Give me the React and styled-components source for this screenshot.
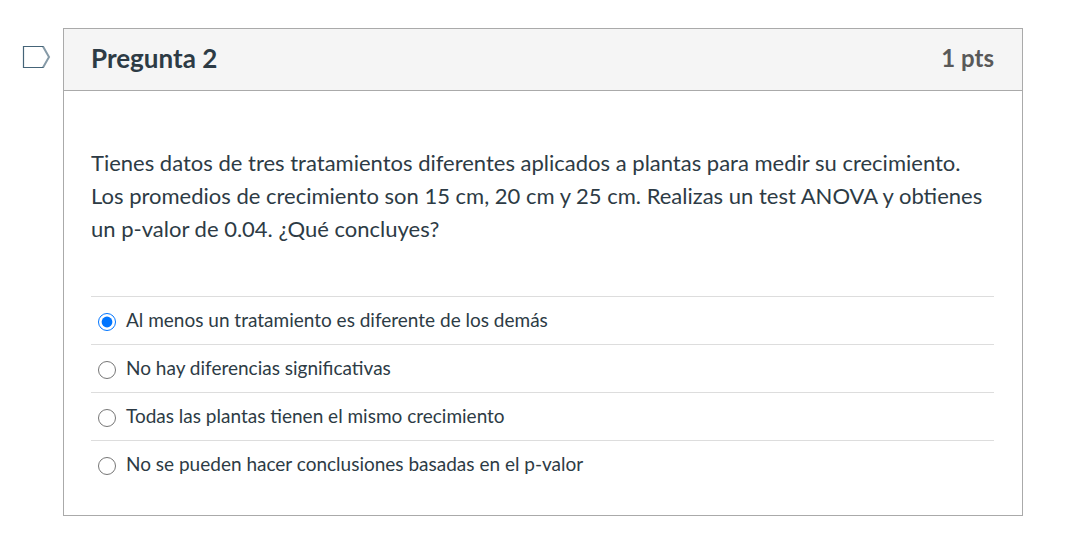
import React, { useState } from "react";
import styled, { createGlobalStyle } from "styled-components";

const GlobalStyle = createGlobalStyle`
  * { box-sizing: border-box; }
  body {
    margin: 0;
    background: #fff;
    color: #2d3b45;
    font-family: Lato, "Liberation Sans", sans-serif;
  }
`;

const Page = styled.main`
  display: flex;
  align-items: flex-start;
  gap: 12px;
  padding: 28px 49px 21px 22px;
`;

const FlagButton = styled.button`
  display: flex;
  flex: none;
  margin: 17px 0 0;
  padding: 0;
  border: 0;
  background: none;
  cursor: pointer;
`;

const Card = styled.section`
  flex: 1;
  min-width: 0;
  border: 1px solid #aaa;
`;

const Header = styled.header`
  display: flex;
  justify-content: space-between;
  align-items: center;
  padding: 13px 28px 16px 27px;
  background: #f5f5f5;
  border-bottom: 1px solid #aaa;
  line-height: 32px;
`;

const Title = styled.h2`
  margin: 0;
  font-size: 26px;
  font-weight: 700;
`;

const Points = styled.span`
  font-size: 24px;
  font-weight: 700;
  color: #595959;
`;

const Body = styled.div`
  padding: 55px 28px 27px 27px;
`;

const Question = styled.p`
  margin: 0 0 51px;
  font-size: 22px;
  line-height: 33px;
`;

const Answers = styled.fieldset`
  margin: 0;
  padding: 0;
  border: 0;
  min-width: 0;
`;

const Answer = styled.label`
  display: flex;
  align-items: center;
  gap: 10px;
  min-height: 48px;
  padding: 0 7px 2px;
  border-top: 1px solid #ddd;
  font-size: 19px;
  line-height: 28px;
  cursor: pointer;
`;

const Radio = styled.input`
  flex: none;
  width: 18px;
  height: 18px;
  margin: 5px 0 0;
`;

const options = [
  "Al menos un tratamiento es diferente de los demás",
  "No hay diferencias significativas",
  "Todas las plantas tienen el mismo crecimiento",
  "No se pueden hacer conclusiones basadas en el p-valor",
];

export default function App() {
  const [selected, setSelected] = useState(0);
  return (
    <>
      <GlobalStyle />
      <Page>
        <FlagButton type="button" aria-label="Marcar pregunta">
          <svg width="29" height="24" viewBox="0 0 29 24" fill="none" stroke="#456478">
            <path d="M21.5 1.5H1.5V22.5H21.5" strokeWidth="1.2" />
            <path d="M21 1.5L27 12L21 22.5" strokeWidth="2" strokeOpacity="0.65" />
          </svg>
        </FlagButton>
        <Card>
          <Header>
            <Title>Pregunta 2</Title>
            <Points>1 pts</Points>
          </Header>
          <Body>
            <Question id="question">
              Tienes datos de tres tratamientos diferentes aplicados a plantas para medir su crecimiento.
              Los promedios de crecimiento son 15 cm, 20 cm y 25 cm. Realizas un test ANOVA y obtienes
              un p-valor de 0.04. ¿Qué concluyes?
            </Question>
            <Answers aria-labelledby="question">
              {options.map((text, i) => (
                <Answer key={text}>
                  <Radio
                    type="radio"
                    name="answer"
                    checked={selected === i}
                    onChange={() => setSelected(i)}
                  />
                  {text}
                </Answer>
              ))}
            </Answers>
          </Body>
        </Card>
      </Page>
    </>
  );
}
